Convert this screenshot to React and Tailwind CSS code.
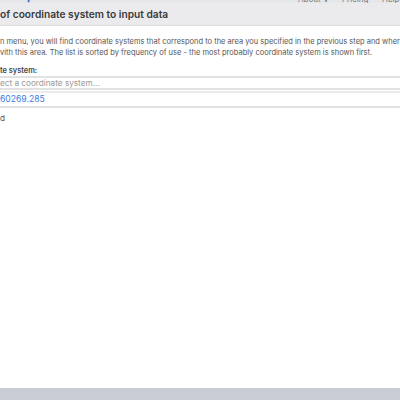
export default function App() {
  const font = { fontFamily: "Inter, 'Noto Sans', sans-serif" };
  return (
    <div className="w-[400px] h-[400px] overflow-hidden bg-white flex flex-col text-[#333]" style={font}>
      <div className="h-[3px] shrink-0 bg-[#e6e7ea] relative overflow-hidden">
        <div className="absolute left-[2px] top-[-9px] text-[11px] leading-none font-bold text-[#2f6fd6] tracking-wide">dataplot</div>
        <div className="absolute left-[298px] top-[-5px] text-[8px] leading-none text-[#777]">About ∨</div>
        <div className="absolute left-[342px] top-[-5px] text-[8px] leading-none text-[#777]">Pricing</div>
        <div className="absolute left-[382px] top-[-5px] text-[8px] leading-none text-[#777]">Help</div>
      </div>
      <div className="h-[23px] shrink-0 bg-[#ebebee] border-b border-[#dcdde1] flex items-center">
        <div className="text-[10.2px] font-semibold text-[#3a3a3a] leading-none">of coordinate system to input data</div>
      </div>
      <div className="flex-1 flex flex-col">
        <div className="pt-[10px] text-[7.5px] leading-[11px] text-[#555]">
          <div className="whitespace-nowrap">n menu, you will find coordinate systems that correspond to the area you specified in the previous step and where</div>
          <div className="whitespace-nowrap">vith this area. The list is sorted by frequency of use - the most probably coordinate system is shown first.</div>
        </div>
        <div className="mt-[7px] text-[7.4px] font-semibold text-[#444] leading-[11px]">te system:</div>
        <div className="mt-[0px] h-[14px] border-y-2 border-[#e2e2e2] flex items-center text-[8.2px] text-[#999]">ect a coordinate system...</div>
        <div className="mt-[1px] h-[17px] border-y-2 border-[#e2e2e2] border-t-[#ececec] flex items-center text-[8.6px] text-[#3b7be6]">60269.285</div>
        <div className="mt-[4px] text-[8.2px] text-[#555]">d</div>
      </div>
      <div className="h-[12px] shrink-0 bg-[#c8ccd4]"></div>
    </div>
  );
}
